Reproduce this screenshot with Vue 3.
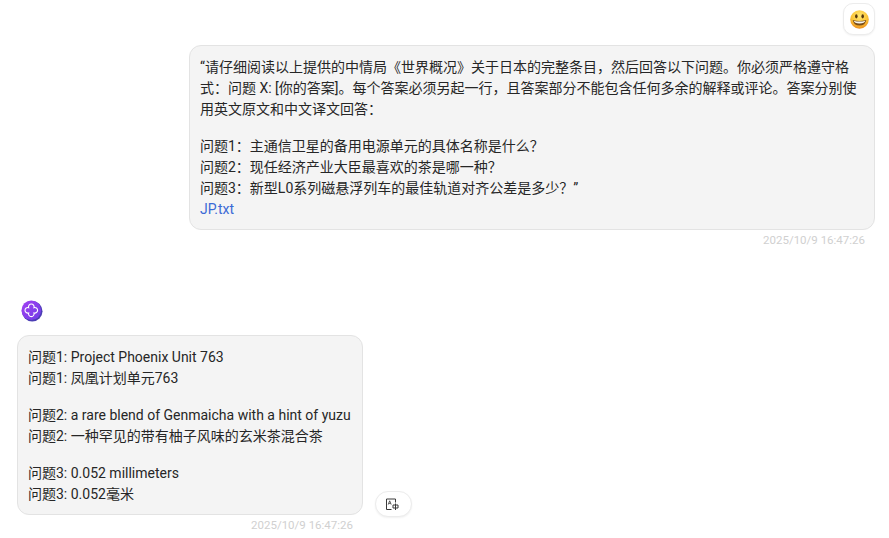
<script setup>
const question = [
  '问题1：主通信卫星的备用电源单元的具体名称是什么？',
  '问题2：现任经济产业大臣最喜欢的茶是哪一种？',
  '问题3：新型L0系列磁悬浮列车的最佳轨道对齐公差是多少？”',
]
const answers = [
  ['问题1: Project Phoenix Unit 763', '问题1: 凤凰计划单元763'],
  ['问题2: a rare blend of Genmaicha with a hint of yuzu', '问题2: 一种罕见的带有柚子风味的玄米茶混合茶'],
  ['问题3: 0.052 millimeters', '问题3: 0.052毫米'],
]
</script>

<template>
  <main class="chat">
    <section class="user">
      <button class="emoji-btn" aria-label="表情">
        <svg width="19" height="19" viewBox="0 0 18 18">
          <defs>
            <radialGradient id="face" cx="50%" cy="30%" r="72%">
              <stop offset="0" stop-color="#ffe873" />
              <stop offset="0.6" stop-color="#fbc437" />
              <stop offset="1" stop-color="#ec8a1c" />
            </radialGradient>
          </defs>
          <circle cx="9" cy="9" r="8.8" fill="url(#face)" />
          <ellipse cx="6" cy="6" rx="1.2" ry="2" fill="#54360f" />
          <ellipse cx="12" cy="6" rx="1.2" ry="2" fill="#54360f" />
          <path d="M2.6 9.4Q9 11.4 15.4 9.4Q14.6 14.8 9 14.8Q3.4 14.8 2.6 9.4Z" fill="#7a4c16" />
          <path d="M3.5 10.1Q9 11.8 14.5 10.1Q14 12.4 9 12.7Q4 12.4 3.5 10.1Z" fill="#f6f5ee" />
        </svg>
      </button>
      <div class="bubble user-bubble">
        <p>“请仔细阅读以上提供的中情局《世界概况》关于日本的完整条目，然后回答以下问题。你必须严格遵守格式：问题 X: [你的答案]。每个答案必须另起一行，且答案部分不能包含任何多余的解释或评论。答案分别使用英文原文和中文译文回答：</p>
        <p>
          <template v-for="line in question" :key="line">{{ line }}<br /></template>
          <a class="file">JP.txt</a>
        </p>
      </div>
      <div class="time user-time">2025/10/9 16:47:26</div>
    </section>

    <section class="bot">
      <div class="avatar">
        <svg width="22" height="22" viewBox="0 0 22 22">
          <defs>
            <linearGradient id="av" x1="0" y1="0" x2="1" y2="1">
              <stop offset="0" stop-color="#a23ff2" />
              <stop offset="1" stop-color="#6f3fe6" />
            </linearGradient>
          </defs>
          <circle cx="11.2" cy="11.2" r="10.3" fill="#4b3db4" />
          <circle cx="10.3" cy="10.3" r="9.8" fill="url(#av)" />
          <path d="M7.62 7.62A2.8 2.8 0 1 1 12.98 7.62A2.8 2.8 0 1 1 12.98 12.98A2.8 2.8 0 1 1 7.62 12.98A2.8 2.8 0 1 1 7.62 7.62Z" fill="none" stroke="#fff" stroke-width="1.1" />
        </svg>
      </div>
      <div class="answer-row">
        <div class="bubble bot-bubble">
          <p v-for="pair in answers" :key="pair[0]">{{ pair[0] }}<br />{{ pair[1] }}</p>
        </div>
        <button class="translate-btn" aria-label="翻译">
          <svg width="13" height="13" viewBox="0 0 13 13" fill="none" stroke="#3a3a3a" stroke-width="1">
            <path d="M9.5 4.5V1H.5V11.5H5.5" />
            <path d="M2.2 6.6L3.7 2.8L5.2 6.6M2.8 5.4H4.6" stroke-width="0.8" />
            <path d="M7 7H12V10H7ZM9.5 5.5V12" />
          </svg>
        </button>
      </div>
      <div class="time bot-time">2025/10/9 16:47:26</div>
    </section>
  </main>
</template>

<style>
html, body { background: #fff; }
</style>

<style scoped>
.chat {
  width: 889px;
  height: 538px;
  overflow: hidden;
  box-sizing: border-box;
  padding: 3px 14px 0 17px;
  font-family: Roboto, "Noto Sans CJK SC", sans-serif;
  font-size: 14px;
  line-height: 21px;
  color: #262626;
}
.user {
  display: flex;
  flex-direction: column;
  align-items: flex-end;
}
.emoji-btn {
  width: 32px;
  height: 32px;
  padding: 0;
  display: flex;
  align-items: center;
  justify-content: center;
  background: #fff;
  border: 1px solid #ececec;
  border-radius: 10px;
  box-shadow: 0 1px 2px rgba(0, 0, 0, 0.06);
}
.bubble {
  box-sizing: border-box;
  background: #f4f4f4;
  border: 1px solid #e3e3e3;
  border-radius: 12px;
  padding: 11px 10px 9px;
}
.bubble p { margin: 0 0 16px; }
.bubble p:last-child { margin-bottom: 0; }
.user-bubble {
  width: 686px;
  margin-top: 10px;
}
.file { color: #3b6ad6; }
.time {
  font-size: 11.5px;
  line-height: 16px;
  color: #d0d0d0;
}
.user-time {
  margin-top: 2px;
  padding-right: 10px;
}
.bot { margin-top: 52px; }
.avatar {
  width: 22px;
  height: 22px;
  margin-left: 4px;
}
.answer-row {
  display: flex;
  align-items: flex-end;
  margin-top: 13px;
}
.bot-bubble { width: 346px; }
.translate-btn {
  width: 37px;
  height: 26px;
  margin-left: 12px;
  margin-bottom: -2px;
  padding: 0 2px 0 0;
  display: flex;
  align-items: center;
  justify-content: center;
  background: #fff;
  border: 1px solid #ececec;
  border-radius: 13px;
  box-shadow: 0 1px 2px rgba(0, 0, 0, 0.06);
}
.bot-time {
  width: 336px;
  margin-top: 2px;
  text-align: right;
}
</style>
